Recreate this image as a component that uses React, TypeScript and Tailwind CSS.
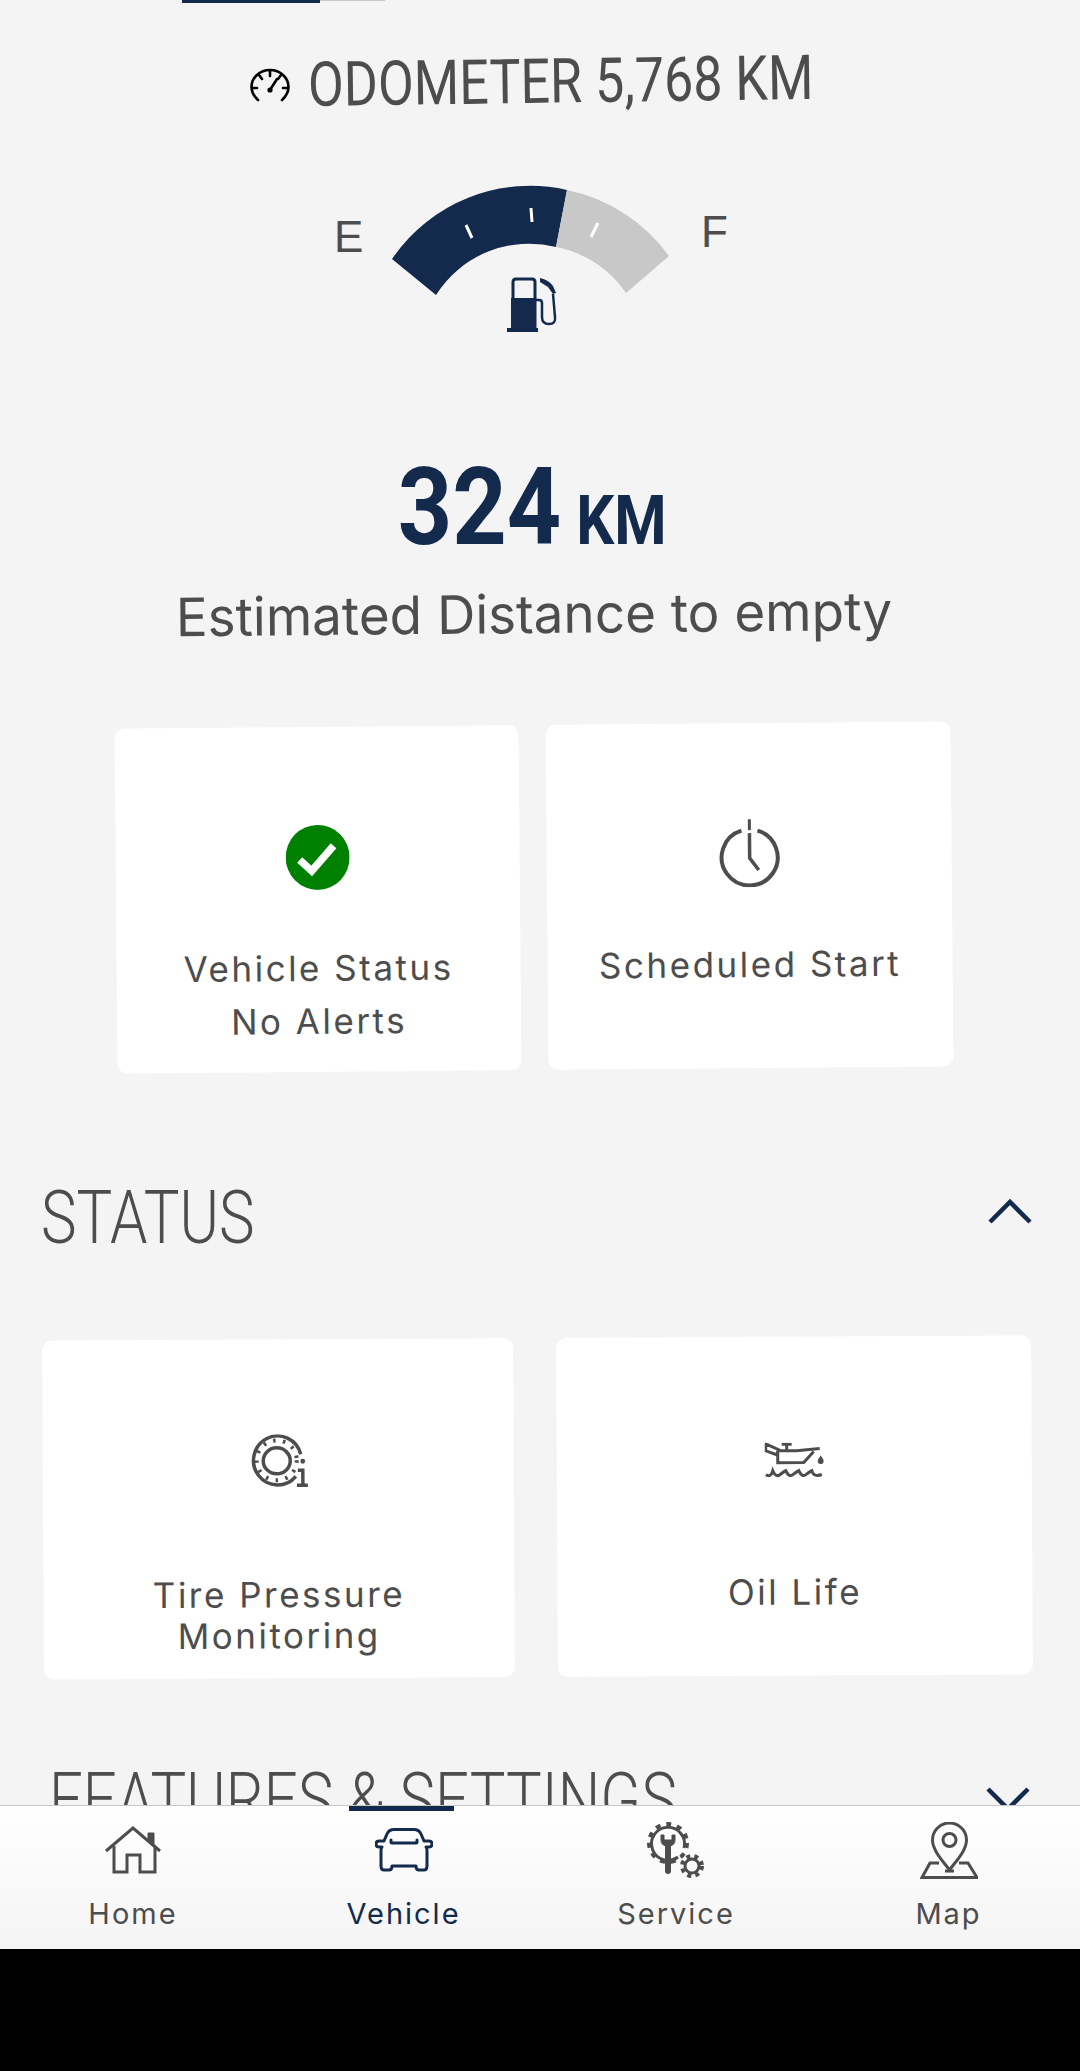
import React from 'react';

/* ─── Icons ─────────────────────────────────────────────────── */

const OdometerIcon = () => (
    <svg width="40" height="34" viewBox="0 0 40 34" fill="none" stroke="#000" strokeWidth="2.6" strokeLinecap="round">
        <path d="M8 32 Q1.5 26 1.5 19 A18.5 17 0 0 1 38.5 19 Q38.5 26 32 32" />
        <path d="M20 3v5M9 7l3 4M31 7l-3 4M2 20h5M33 20h5M20 22l7-11" />
        <circle cx="20" cy="22" r="2.6" fill="#000" stroke="none" />
    </svg>
);

const ClockIcon = () => (
    <svg width="64" height="68" viewBox="0 0 64 68" fill="none" stroke="#4d4d4d" strokeWidth="4">
        <path d="M24 11.5 A28 28 0 1 0 40 11.5" />
        <path d="M32 0v11" strokeWidth="3" />
        <path d="M32 14v25l9 12" strokeWidth="3.5" />
    </svg>
);

const CheckIcon = () => (
    <svg width="64" height="65" viewBox="0 0 64 65">
        <ellipse cx="32" cy="32.5" rx="32" ry="32.5" fill="#008000" />
        <path d="M14 35l12 11 22-25" fill="none" stroke="#fff" strokeWidth="7.5" />
    </svg>
);

const TireIcon = () => (
    <svg width="60" height="53" viewBox="0 0 60 53" fill="none" stroke="#4d4d4d" strokeWidth="3.5">
        <path d="M50 20 A24 24.5 0 1 0 45 42" />
        <circle cx="26" cy="26" r="20" strokeWidth="4" strokeDasharray="2.5 7.5" />
        <ellipse cx="26" cy="26.5" rx="13.5" ry="13" />
        <circle cx="52" cy="27" r="2.4" fill="#4d4d4d" stroke="none" />
        <path d="M47 36h5v15M46 51h11" />
    </svg>
);

const OilIcon = () => (
    <svg width="59" height="36" viewBox="0 0 59 36" fill="none" stroke="#4d4d4d" strokeWidth="3">
        <path d="M1 1l13 6-2 5-11-4zM17 1.5h10M22 1.5v6M13 8h19l23-2M13 8v12h26l10-11" />
        <path d="M56 13c-2 3-3 4-3 5.5a3 3 0 0 0 6 0c0-1.500-1-2.500-3-5.500z" fill="#4d4d4d" stroke="none" />
        <path d="M1 32q5 3 7-4q3 7 7 4t6-4q3 7 7 4t6-4q3 7 7 4t6-4q2 7 10 4" />
    </svg>
);

const HomeIcon = () => (
    <svg width="56" height="48" viewBox="0 0 56 48" fill="none" stroke="#4d4d4d" strokeWidth="3">
        <path d="M1 25L28 2l27 23" />
        <path d="M43 7h6v14l-6-5z" fill="#4d4d4d" strokeWidth="1" />
        <path d="M9 20v26h13V29h13v17h15V20" />
    </svg>
);

const CarIcon = () => (
    <svg width="58" height="44" viewBox="0 0 58 44" fill="none" stroke="#132a4d" strokeWidth="3" strokeLinejoin="round">
        <path d="M9 13l3-7q2-4.500 7-4.500h20q5 0 7 4.500l3 7h5q3 0 3 3t-3 3h-3q1 1 1 4v15q0 4-3 4h-5q-3 0-3-4H17q0 4-3 4H9q-3 0-3-4V23q0-3 1-4H4q-3 0-3-3t3-3z" />
        <path d="M16 12v2q0 1 1 1h24q1 0 1-1v-2" strokeLinecap="round" />
    </svg>
);

const ServiceIcon = () => (
    <svg width="58" height="56" viewBox="0 0 58 56" fill="none" stroke="#4d4d4d">
        <path d="M31 35A16.500 16.500 0 1 1 37 26" strokeWidth="3" />
        <circle cx="21" cy="21" r="19" strokeWidth="4" strokeDasharray="5 5.900" />
        <path d="M14 13v5q0 6 7 6t7-6v-5l-3 0v5h-8v-5z" fill="#4d4d4d" strokeWidth="1" />
        <path d="M21 22v27" strokeWidth="6" strokeLinecap="round" />
        <circle cx="45" cy="44" r="7" strokeWidth="3" />
        <circle cx="45" cy="44" r="10" strokeWidth="4" strokeDasharray="4 4.200" />
    </svg>
);

const MapIcon = () => (
    <svg width="58" height="57" viewBox="0 0 58 57" fill="none" stroke="#4d4d4d" strokeWidth="3">
        <path d="M29.500 48C22 38 12.500 28 12.500 18a17 17 0 0 1 34 0c0 10-9.500 20-17 30z" />
        <circle cx="29.500" cy="18" r="6.500" />
        <path d="M19 41H10L2 55.500h55L48 41h-9M25 49h9" />
    </svg>
);

/* ─── Tile ──────────────────────────────────────────────────── */

const Tile: React.FC<{ className: string; children: React.ReactNode }> = ({ className, children }) => (
    <div className={`flex flex-col items-center rounded-[10px] bg-white text-[35px] text-[#4d4d4d] tracking-[2.5px] ${className}`}>
        {children}
    </div>
);

/* ─── Screen ────────────────────────────────────────────────── */

export default function App() {
    return (
        <div className="flex h-[2071px] w-[1080px] flex-col overflow-hidden bg-black font-['Inter',sans-serif]">
            <main className="h-[1805px] shrink-0 overflow-hidden bg-[#f4f4f4]">
                {/* Sliver of the scrolled-off tab bar */}
                <div className="flex h-[3px] pl-[182px]">
                    <div className="h-[3px] w-[138px] bg-[#132a4d]" />
                    <div className="h-[1px] w-[65px] bg-[#c8c8c8]" />
                </div>

                {/* Odometer */}
                <div className="mb-[13px] flex h-[164px] items-center gap-[18px] pl-[250px]">
                    <OdometerIcon />
                    <span className="origin-left -rotate-[0.8deg] scale-x-[0.84] whitespace-nowrap font-['Roboto',sans-serif] text-[62px] leading-none text-[#4d4d4d]">
                        ODOMETER 5,768 KM
                    </span>
                </div>

                {/* Fuel gauge */}
                <div className="flex h-[160px] items-start pl-[334px] font-['Liberation_Sans',sans-serif] text-[44px] leading-none text-[#4d4d4d]">
                    <span className="mt-[35px] w-[46px]">E</span>
                    <svg width="300" height="160" viewBox="380 180 300 160" className="shrink-0">
                        <path d="M392 259A167 167 0 0 1 567 190L556 247A110 110 0 0 0 436 295Z" fill="#132a4d" />
                        <path d="M567 190A167 167 0 0 1 669 256L626 293A110 110 0 0 0 556 247Z" fill="#c8c8c8" />
                        <path d="M466 225l6 13M531 208l1 14M598 223l-7 14" stroke="#fff" strokeWidth="3" />
                        <path d="M513 329V282q0-3 3-3h16q3 0 3 3v47z" fill="none" stroke="#132a4d" strokeWidth="3" />
                        <rect x="511" y="298" width="24" height="31" fill="#132a4d" />
                        <rect x="507" y="328" width="31" height="4" fill="#132a4d" />
                        <path d="M535 300h4q3 0 3 3v14q0 7 7 7t6-7l-2-23" fill="none" stroke="#132a4d" strokeWidth="2.500" />
                        <path d="M540 278q9 2 13 8l3 7-3 1-5-7-8-5z" fill="#132a4d" />
                    </svg>
                    <span className="ml-[21px] mt-[30px]">F</span>
                </div>

                {/* Distance to empty */}
                <div className="mt-[113px] flex h-[108px] origin-left scale-x-[0.88] items-baseline gap-[17px] pl-[452px] font-['Roboto',sans-serif] font-bold leading-none text-[#132a4d]">
                    <span className="text-[108px] leading-none">324</span>
                    <span className="text-[68px] leading-none">KM</span>
                </div>
                <p className="mt-[28px] h-[50px] -rotate-[0.5deg] whitespace-nowrap pr-[12px] text-center text-[53px] leading-[50px] text-[#4d4d4d]">
                    Estimated Distance to empty
                </p>

                {/* Vehicle status tiles */}
                <div className="ml-[116px] mt-[86px] flex h-[345px] w-[836px] -rotate-[0.5deg] gap-[27px]">
                    <Tile className="w-[404px] pt-[98px]">
                        <CheckIcon />
                        <span className="mt-[52px] text-center leading-[53px]">
                            Vehicle Status
                            <br />
                            No Alerts
                        </span>
                    </Tile>
                    <Tile className="w-[405px] pt-[96px]">
                        <ClockIcon />
                        <span className="mt-[51px] leading-[53px]">Scheduled Start</span>
                    </Tile>
                </div>

                {/* Status */}
                <div className="mt-[111px] flex h-[74px] items-center justify-between pl-[41px] pr-[48px]">
                    <h2 className="origin-left scale-x-[0.81] font-['Roboto',sans-serif] text-[74px] font-light leading-none text-[#4d4d4d]">
                        STATUS
                    </h2>
                    <svg width="44" height="26" viewBox="0 0 44 26" fill="none" stroke="#132a4d" strokeWidth="4.500" className="mb-[14px]">
                        <path d="M2 24L22 4l20 20" />
                    </svg>
                </div>
                <div className="ml-[43px] mt-[83px] flex h-[339px] w-[989px] -rotate-[0.3deg] gap-[43px]">
                    <Tile className="w-[471px] pt-[95px]">
                        <span className="pl-[4px]">
                            <TireIcon />
                        </span>
                        <span className="mt-[87px] text-center leading-[41px]">
                            Tire Pressure
                            <br />
                            Monitoring
                        </span>
                    </Tile>
                    <Tile className="w-[475px] pt-[106px]">
                        <OilIcon />
                        <span className="mt-[93px] leading-[41px]">Oil Life</span>
                    </Tile>
                </div>

                {/* Features & settings, cut off by the tab bar */}
                <div className="mt-[86px] flex h-[74px] items-start justify-between pl-[49px] pr-[50px]">
                    <h2 className="origin-left scale-x-[0.81] whitespace-nowrap font-['Roboto',sans-serif] text-[74px] font-light leading-none text-[#4d4d4d]">
                        FEATURES &amp; SETTINGS
                    </h2>
                    <svg width="44" height="26" viewBox="0 0 44 26" fill="none" stroke="#132a4d" strokeWidth="4.500" className="mt-[24px]">
                        <path d="M2 2l20 20L42 2" />
                    </svg>
                </div>
            </main>

            {/* Tab bar */}
            <nav className="grid h-[144px] shrink-0 grid-cols-[266px_275px_270px_275px] overflow-hidden border-t border-[#c8c8c8] bg-gradient-to-b from-white to-[#f4f4f4] text-[29px] leading-none tracking-[2px] text-[#4d4d4d]">
                {[
                    { label: 'Home', icon: <HomeIcon />, active: false },
                    { label: 'Vehicle', icon: <CarIcon />, active: true },
                    { label: 'Service', icon: <ServiceIcon />, active: false },
                    { label: 'Map', icon: <MapIcon />, active: false },
                ].map((item) => (
                    <div key={item.label} className={`relative flex flex-col items-center pt-[14px] ${item.active ? 'text-[#132a4d]' : ''}`}>
                        {item.active && <div className="absolute left-[83px] top-0 h-[5px] w-[105px] bg-[#132a4d]" />}
                        <div className="flex h-[60px] items-center">{item.icon}</div>
                        <span className="mt-[19px]">{item.label}</span>
                    </div>
                ))}
            </nav>
        </div>
    );
}
